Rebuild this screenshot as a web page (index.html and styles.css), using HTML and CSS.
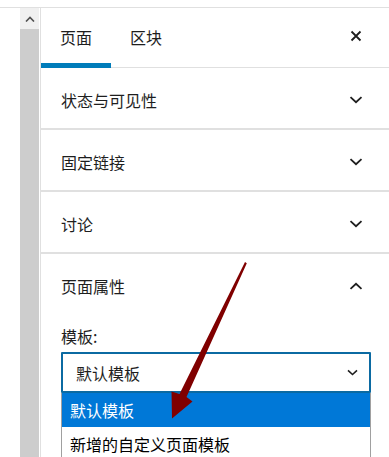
FILE: index.html
```html
<!DOCTYPE html>
<html lang="zh-CN">
<head>
<meta charset="utf-8">
<title>页面属性</title>
<link rel="stylesheet" href="styles.css">
</head>
<body>
<div class="page">
  <div class="topbar"></div>
  <div class="main">
    <div class="leftpad"></div>
    <div class="scrollbar">
      <div class="sb-button">
        <svg width="10" height="6" viewBox="0 0 10 6"><path d="M1 5.5 L5 1.5 L9 5.5" fill="none" stroke="#505050" stroke-width="1.6"/></svg>
      </div>
      <div class="sb-thumb"></div>
    </div>
    <div class="gap"></div>
    <div class="sidebar">
      <div class="tabs">
        <div class="tab active">页面</div>
        <div class="tab">区块</div>
        <div class="spacer"></div>
        <div class="close">
          <svg width="12" height="12" viewBox="0 0 12 12"><path d="M1.5 1.5 L10.5 10.5 M10.5 1.5 L1.5 10.5" fill="none" stroke="#1e1e1e" stroke-width="1.8"/></svg>
        </div>
      </div>
      <div class="panel">
        <div class="panel-title"><span>状态与可见性</span>
          <svg class="chev" width="14" height="8" viewBox="0 0 14 8"><path d="M1.5 1.2 L7 6.2 L12.5 1.2" fill="none" stroke="#1e1e1e" stroke-width="1.8"/></svg>
        </div>
      </div>
      <div class="panel">
        <div class="panel-title"><span>固定链接</span>
          <svg class="chev" width="14" height="8" viewBox="0 0 14 8"><path d="M1.5 1.2 L7 6.2 L12.5 1.2" fill="none" stroke="#1e1e1e" stroke-width="1.8"/></svg>
        </div>
      </div>
      <div class="panel">
        <div class="panel-title"><span>讨论</span>
          <svg class="chev" width="14" height="8" viewBox="0 0 14 8"><path d="M1.5 1.2 L7 6.2 L12.5 1.2" fill="none" stroke="#1e1e1e" stroke-width="1.8"/></svg>
        </div>
      </div>
      <div class="panel open">
        <div class="panel-title"><span>页面属性</span>
          <svg class="chev" width="14" height="8" viewBox="0 0 14 8"><path d="M1.5 6.8 L7 1.8 L12.5 6.8" fill="none" stroke="#1e1e1e" stroke-width="1.8"/></svg>
        </div>
        <div class="panel-body">
          <div class="label">模板:</div>
          <div class="select-wrap">
            <div class="select">
              <span>默认模板</span>
              <svg width="11" height="7" viewBox="0 0 11 7"><path d="M1 1.3 L5.5 5.5 L10 1.3" fill="none" stroke="#1e1e1e" stroke-width="1.6"/></svg>
            </div>
            <div class="dropdown">
              <div class="option selected">默认模板</div>
              <div class="option">新增的自定义页面模板</div>
            </div>
          </div>
        </div>
      </div>
    </div>
  </div>
  <svg class="arrow" width="389" height="457" viewBox="0 0 389 457">
    <polygon points="245,262 246.8,263.2 186.5,397 192.5,401.5 172,418.5 171.5,391.5 179.5,394" fill="#800000"/>
  </svg>
</div>
</body>
</html>
```

FILE: styles.css
```css
html, body {
  margin: 0;
  padding: 0;
  background: #ffffff;
}
body {
  font-family: "Noto Sans CJK SC", "Noto Sans", sans-serif;
  color: #1e1e1e;
}
.page {
  position: relative;
  width: 389px;
  height: 457px;
  overflow: hidden;
  display: flex;
  flex-direction: column;
}
.topbar {
  height: 7px;
  border-bottom: 1px solid #e0e0e0;
  flex: none;
}
.main {
  flex: 1;
  display: flex;
  min-height: 0;
}
.leftpad {
  width: 20px;
  flex: none;
}
.scrollbar {
  width: 19px;
  flex: none;
  display: flex;
  flex-direction: column;
}
.sb-button {
  height: 21px;
  background: #f0f0f0;
  display: flex;
  align-items: center;
  justify-content: center;
}
.sb-thumb {
  flex: 1;
  background: #cdcdcd;
}
.gap {
  width: 1px;
  flex: none;
}
.sidebar {
  flex: 1;
  border-left: 1px solid #e0e0e0;
  display: flex;
  flex-direction: column;
}
.tabs {
  height: 59px;
  border-bottom: 1px solid #e0e0e0;
  display: flex;
  align-items: stretch;
  flex: none;
}
.tab {
  width: 70px;
  height: 60px;
  margin-bottom: -1px;
  display: flex;
  align-items: center;
  justify-content: center;
  font-size: 16px;
  line-height: 20px;
  padding-bottom: 3px;
  box-sizing: border-box;
}
.tab.active {
  box-shadow: inset 0 -5px 0 #007cba;
}
.spacer {
  flex: 1;
}
.close {
  width: 12px;
  margin-right: 27px;
  display: flex;
  align-items: center;
  padding-bottom: 3px;
}
.close svg {
  display: block;
}
.panel {
  border-bottom: 2px solid #e0e0e0;
  flex: none;
}
.panel-title {
  height: 60px;
  display: flex;
  align-items: center;
  justify-content: space-between;
  padding: 4px 26px 0 20px;
  box-sizing: border-box;
  font-size: 16px;
  line-height: 20px;
}
.panel-title .chev {
  display: block;
}
.panel.open {
  border-bottom: none;
}
.panel-body {
  padding: 0 18px 0 20px;
}
.label {
  font-size: 16px;
  line-height: 20px;
  margin-top: 12px;
}
.select-wrap {
  position: relative;
  margin-top: 6px;
}
.select {
  height: 37px;
  border: 2px solid #0b6aa2;
  border-radius: 1px;
  display: flex;
  align-items: center;
  justify-content: space-between;
  padding: 0 11px 0 13px;
  font-size: 16px;
  line-height: 20px;
}
.select svg {
  display: block;
}
.dropdown {
  position: absolute;
  left: 0;
  right: 0;
  top: 100%;
  border: 1px solid #a0a0a0;
  border-top: none;
  background: #ffffff;
}
.option {
  height: 34px;
  display: flex;
  align-items: center;
  padding-left: 8px;
  font-size: 16px;
  line-height: 20px;
  color: #000000;
}
.option.selected {
  background: #0078d7;
  color: #ffffff;
}
.arrow {
  position: absolute;
  left: 0;
  top: 0;
  pointer-events: none;
}
```
